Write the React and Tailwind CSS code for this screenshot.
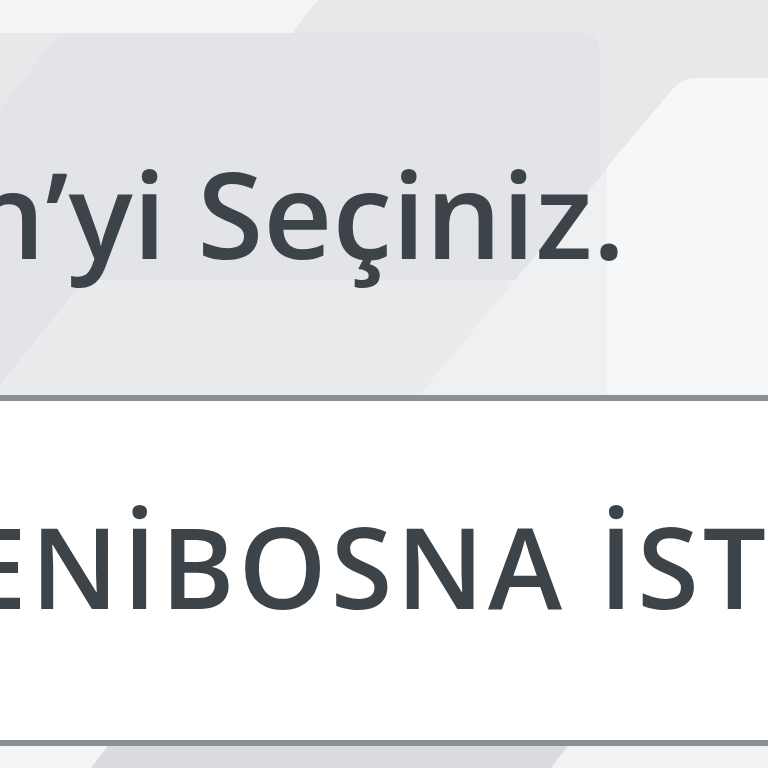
const font = { fontFamily: '"Open Sans", "Noto Sans", sans-serif' };

const Backdrop = () => (
  <svg
    className="absolute inset-0 h-full w-full"
    viewBox="0 0 768 768"
    preserveAspectRatio="none"
  >
    <rect width="768" height="768" fill="#e7e8ea" />
    <path d="M0 0 H318 L292 33 H0 Z" fill="#f3f4f6" />
    <path d="M0 110 L50 45 Q58 33 72 33 H582 Q600 33 600 55 V395 H0 Z" fill="#e2e4e7" />
    <path d="M0 385 L74 293 Q84 280 100 280 H600 V395 H0 Z" fill="#e9ebed" />
    <path d="M420 395 L672 90 Q682 78 698 78 H768 V395 Z" fill="#eff0f2" />
    <path d="M607 167 L672 90 Q682 78 698 78 H768 V395 H607 Z" fill="#f6f7f8" />
    <rect y="740" width="768" height="28" fill="#f4f5f6" />
    <path d="M108 746 H568 L551 768 H91 Z" fill="#d9dbde" />
    <path d="M568 746 H768 V768 H551 Z" fill="#f1f2f4" />
  </svg>
);

export default function App() {
  return (
    <div className="relative h-[768px] w-[768px] overflow-hidden" style={font}>
      <Backdrop />
      <div className="relative flex flex-col">
        <div className="h-[395px] overflow-hidden pt-[153px]">
          <h1 className="-ml-[31px] whitespace-nowrap text-[120px] font-semibold leading-none text-[#3c444a]">
            n’yi Seçiniz.
          </h1>
        </div>
        <div className="h-[351px] overflow-hidden border-y-[6px] border-[#8d9092] bg-white pt-[109px]">
          <p className="-ml-[106px] whitespace-nowrap text-[112px] font-semibold leading-none tracking-[4px] text-[#3c444a]">
            YENİBOSNA İSTASYONU
          </p>
        </div>
      </div>
    </div>
  );
}
